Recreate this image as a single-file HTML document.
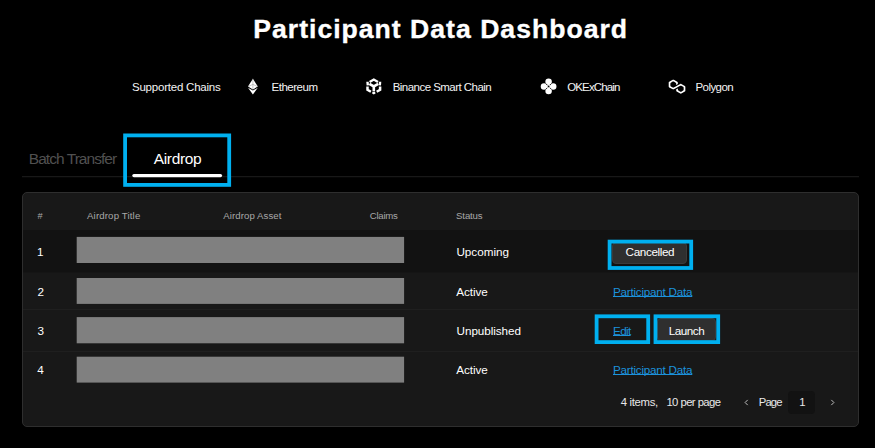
<!DOCTYPE html>
<html><head><meta charset="utf-8"><title>Participant Data Dashboard</title>
<style>
*{box-sizing:border-box;margin:0;padding:0}
html,body{width:875px;height:448px;background:#000;overflow:hidden}
body{position:relative;font-family:"Liberation Sans",sans-serif;color:#fff}
.t{position:absolute;white-space:nowrap;line-height:20px;height:20px}
.a{position:absolute}
h1{-webkit-text-stroke:0.35px #fff}
.u{text-decoration:underline;text-decoration-thickness:1px;text-underline-offset:0px;text-decoration-skip-ink:none}
.hl{position:absolute;border:4px solid #0cb0ee}
.btn{position:absolute;background:#2f2f2f;border:1px solid #3a3a3a;border-radius:4px}
.bar{position:absolute;left:77px;width:327px;height:26px;background:#808080}
svg{position:absolute;overflow:visible}

</style></head><body>
<div class="a" style="left:22px;top:192px;width:837px;height:235px;background:#181818;border:1px solid #2e2e2e;border-radius:5px"></div>
<svg style="left:0;top:0" width="875" height="448"><rect x="23" y="230.1" width="835" height="42.4" fill="#121212"/></svg>
<div class="a" style="left:23px;top:309px;width:835px;height:1px;background:#1f1f1f"></div>
<div class="a" style="left:23px;top:351px;width:835px;height:1px;background:#1f1f1f"></div>
<svg style="left:0;top:0" width="875" height="448"><rect x="22" y="176.2" width="837" height="1" fill="#1f1f1f"/><rect x="132.3" y="173.9" width="89.8" height="3.3" rx="1.6" fill="#fff"/><rect x="76.7" y="236.9" width="327.4" height="26.1" fill="#808080"/><rect x="76.7" y="278.0" width="327.4" height="25.9" fill="#808080"/><rect x="76.7" y="317.1" width="327.4" height="26.2" fill="#808080"/><rect x="76.7" y="356.7" width="327.4" height="25.9" fill="#808080"/></svg>
<div class="btn" style="left:612.2px;top:242px;width:75px;height:22.3px"></div>
<div class="btn" style="left:657px;top:318px;width:59.3px;height:23px"></div>
<div class="a" style="left:788px;top:391px;width:27px;height:23px;background:#121212;border-radius:4px"></div>
<h1 class="t" style="left:253.30px;top:18.98px;font-size:26.6px;font-weight:bold;color:#fff;letter-spacing:0.999px">Participant Data Dashboard</h1>
<div class="t" style="left:132.00px;top:76.52px;font-size:11.5px;font-weight:normal;color:#f4f4f4;letter-spacing:-0.221px">Supported Chains</div>
<div class="t" style="left:271.60px;top:76.52px;font-size:11.5px;font-weight:normal;color:#f4f4f4;letter-spacing:-0.497px">Ethereum</div>
<div class="t" style="left:392.70px;top:76.52px;font-size:11.5px;font-weight:normal;color:#f4f4f4;letter-spacing:-0.537px">Binance Smart Chain</div>
<div class="t" style="left:567.20px;top:76.52px;font-size:11.5px;font-weight:normal;color:#f4f4f4;letter-spacing:-0.861px">OKExChain</div>
<div class="t" style="left:695.50px;top:76.52px;font-size:11.5px;font-weight:normal;color:#f4f4f4;letter-spacing:-0.577px">Polygon</div>
<div class="t" style="left:28.80px;top:149.23px;font-size:15.5px;font-weight:normal;color:#505050;letter-spacing:-0.955px">Batch Transfer</div>
<div class="t" style="left:153.80px;top:149.23px;font-size:15.5px;font-weight:normal;color:#fff;letter-spacing:-0.358px">Airdrop</div>
<div class="t" style="left:37.50px;top:205.81px;font-size:9.2px;font-weight:normal;color:#a8a8a8;letter-spacing:0.000px">#</div>
<div class="t" style="left:87.00px;top:205.67px;font-size:9.6px;font-weight:normal;color:#a8a8a8;letter-spacing:0.173px">Airdrop Title</div>
<div class="t" style="left:223.30px;top:205.67px;font-size:9.6px;font-weight:normal;color:#a8a8a8;letter-spacing:0.090px">Airdrop Asset</div>
<div class="t" style="left:369.70px;top:205.67px;font-size:9.6px;font-weight:normal;color:#a8a8a8;letter-spacing:-0.224px">Claims</div>
<div class="t" style="left:456.10px;top:205.67px;font-size:9.6px;font-weight:normal;color:#a8a8a8;letter-spacing:-0.140px">Status</div>
<div class="t" style="left:37.00px;top:241.95px;font-size:11.7px;font-weight:normal;color:#fff;letter-spacing:0.000px">1</div>
<div class="t" style="left:37.50px;top:281.95px;font-size:11.7px;font-weight:normal;color:#fff;letter-spacing:0.000px">2</div>
<div class="t" style="left:37.50px;top:320.95px;font-size:11.7px;font-weight:normal;color:#fff;letter-spacing:0.000px">3</div>
<div class="t" style="left:37.30px;top:359.95px;font-size:11.7px;font-weight:normal;color:#fff;letter-spacing:0.000px">4</div>
<div class="t" style="left:456.40px;top:241.95px;font-size:11.7px;font-weight:normal;color:#fff;letter-spacing:-0.002px">Upcoming</div>
<div class="t" style="left:456.30px;top:281.95px;font-size:11.7px;font-weight:normal;color:#fff;letter-spacing:-0.065px">Active</div>
<div class="t" style="left:456.60px;top:320.95px;font-size:11.7px;font-weight:normal;color:#fff;letter-spacing:-0.058px">Unpublished</div>
<div class="t" style="left:456.30px;top:359.95px;font-size:11.7px;font-weight:normal;color:#fff;letter-spacing:-0.065px">Active</div>
<div class="t" style="left:625.60px;top:241.95px;font-size:11.7px;font-weight:normal;color:#fff;letter-spacing:-0.372px">Cancelled</div>
<div class="t u" style="left:613.00px;top:281.95px;font-size:11.7px;font-weight:normal;color:#1c92dc;letter-spacing:-0.244px">Participant Data</div>
<div class="t u" style="left:613.00px;top:320.95px;font-size:11.7px;font-weight:normal;color:#1c92dc;letter-spacing:-0.631px">Edit</div>
<div class="t" style="left:668.70px;top:320.95px;font-size:11.7px;font-weight:normal;color:#fff;letter-spacing:-0.469px">Launch</div>
<div class="t u" style="left:613.00px;top:359.95px;font-size:11.7px;font-weight:normal;color:#1c92dc;letter-spacing:-0.244px">Participant Data</div>
<div class="t" style="left:620.70px;top:392.08px;font-size:11.3px;font-weight:normal;color:#e8e8e8;letter-spacing:-0.302px">4 items,</div>
<div class="t" style="left:666.40px;top:392.08px;font-size:11.3px;font-weight:normal;color:#e8e8e8;letter-spacing:-0.562px">10 per page</div>
<div class="t" style="left:758.80px;top:392.08px;font-size:11.3px;font-weight:normal;color:#e8e8e8;letter-spacing:-0.900px">Page</div>
<div class="t" style="left:799.20px;top:392.08px;font-size:11.3px;font-weight:normal;color:#e8e8e8;letter-spacing:0.000px">1</div>
<svg style="left:0;top:0" width="875" height="448"><rect x="125.10" y="135.40" width="104.10" height="49.50" fill="none" stroke="#00b0f0" stroke-width="3.8"/></svg>
<svg style="left:0;top:0" width="875" height="448"><rect x="609.60" y="241.60" width="81.60" height="26.40" fill="none" stroke="#00b0f0" stroke-width="3.8"/></svg>
<svg style="left:0;top:0" width="875" height="448"><rect x="596.60" y="316.30" width="51.60" height="25.80" fill="none" stroke="#00b0f0" stroke-width="3.8"/></svg>
<svg style="left:0;top:0" width="875" height="448"><rect x="655.50" y="316.30" width="62.70" height="25.80" fill="none" stroke="#00b0f0" stroke-width="3.8"/></svg>
<svg style="left:744px;top:399px" width="5" height="7" viewBox="0 0 5 7"><path d="M3.7 0.9 L1.1 3.5 L3.7 6.1" fill="none" stroke="#bdbdbd" stroke-width="1"/></svg>
<svg style="left:830px;top:399px" width="5" height="7" viewBox="0 0 5 7"><path d="M1.3 0.9 L3.9 3.5 L1.3 6.1" fill="none" stroke="#bdbdbd" stroke-width="1"/></svg>
<svg style="left:0;top:0" width="875" height="448"><g transform="translate(248 78.7)"><path d="M4.9 0 L9.8 7.9 L4.9 10.8 L0 7.9 Z" fill="#fff"/><path d="M0 9 L4.9 11.9 L9.8 9 L4.9 15.7 Z" fill="#fff"/><path d="M4.9 0 V10.8 M0 7.9 L4.9 5.7 L9.8 7.9" stroke="#8a8a8a" stroke-width="0.5" fill="none"/></g><g transform="translate(373.8 86.35)" fill="none" stroke="#fff" stroke-width="2.4"><path d="M-4.2 -4.4 L0 -6.8 L4.2 -4.4"/><path d="M-4.4 -2.5 L0 0.1 L4.4 -2.5 M0 -0.5 V4.8" stroke-width="2.6"/><path d="M-6.3 -4.6 L-6 -0.9"/><path d="M6.3 -4.6 L6 -0.9"/><path d="M-6.3 0.2 V3.4 L-2.9 5.4" stroke-width="2.5"/><path d="M6.3 0.2 V3.4 L2.9 5.4" stroke-width="2.5"/><path d="M-1.4 6.1 L0 6.9 L1.4 6.1" stroke-width="2.1"/></g><g transform="translate(548.6 86.47)"><g fill="#fff"><circle cx="0" cy="-4.6" r="3.25"/><circle cx="0" cy="4.6" r="3.25"/><circle cx="-4.6" cy="0" r="3.25"/><circle cx="4.6" cy="0" r="3.25"/><rect x="-1.9" y="-1.9" width="3.8" height="3.8" transform="rotate(45)"/></g><circle cx="0" cy="0" r="0.9" fill="#000"/><path d="M-3 -3 L-1.3 -1.3 M3 -3 L1.3 -1.3 M-3 3 L-1.3 1.3 M3 3 L1.3 1.3" stroke="#000" stroke-width="0.8"/></g><g transform="translate(668.7 79.7) scale(0.4349 0.4149)"><path d="M29,10.2c-0.7-0.4-1.6-0.4-2.4,0L21,13.5l-3.8,2.1l-5.5,3.3c-0.7,0.4-1.6,0.4-2.4,0L5,16.3 c-0.7-0.4-1.2-1.2-1.2-2.1v-5c0-0.8,0.4-1.6,1.2-2.1l4.3-2.5c0.7-0.4,1.6-0.4,2.4,0L16,7.2c0.7,0.4,1.2,1.2,1.2,2.1v3.3l3.8-2.2V7 c0-0.8-0.4-1.6-1.2-2.1l-8-4.7c-0.7-0.4-1.6-0.4-2.4,0L1.2,5C0.4,5.4,0,6.2,0,7v9.4c0,0.8,0.4,1.6,1.2,2.1l8.1,4.7 c0.7,0.4,1.6,0.4,2.4,0l5.5-3.2l3.8-2.2l5.5-3.2c0.7-0.4,1.6-0.4,2.4,0l4.3,2.5c0.7,0.4,1.2,1.2,1.2,2.1v5c0,0.8-0.4,1.6-1.2,2.1 L29,28.8c-0.7,0.4-1.6,0.4-2.4,0l-4.3-2.5c-0.7-0.4-1.2-1.2-1.2-2.1V21l-3.8,2.2v3.3c0,0.8,0.4,1.6,1.2,2.1l8.1,4.7 c0.7,0.4,1.6,0.4,2.4,0l8.1-4.7c0.7-0.4,1.2-1.2,1.2-2.1V17c0-0.8-0.4-1.6-1.2-2.1L29,10.2z" fill="#fff"/></g></svg>
</body></html>
